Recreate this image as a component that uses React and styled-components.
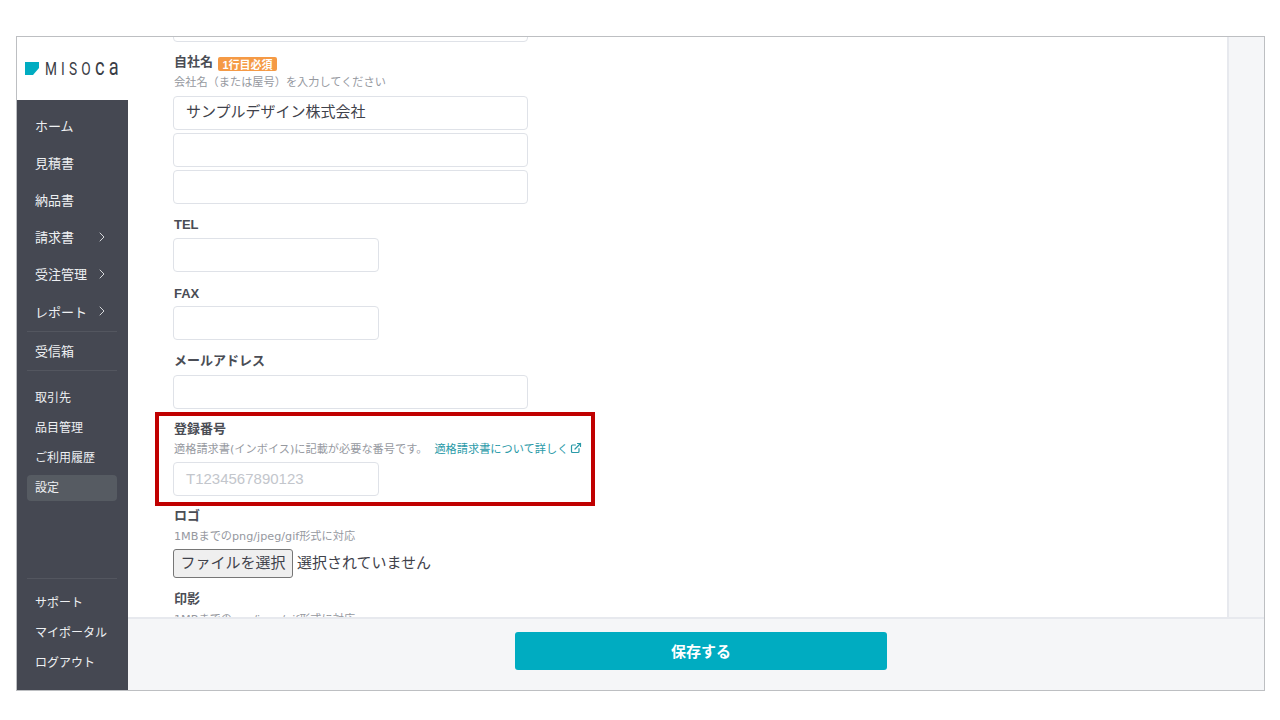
import styled, { createGlobalStyle } from 'styled-components';
import { ChevronRight, ExternalLink } from 'lucide-react';

const GlobalStyle = createGlobalStyle`
  html, body {
    margin: 0;
    background: #fff;
    font-family: "Liberation Sans", "Noto Sans CJK JP", sans-serif;
    color: #3f424b;
  }
  * { box-sizing: border-box; }
`;

const Frame = styled.div`
  position: relative;
  display: flex;
  width: 1249px;
  height: 655px;
  margin: 36px 0 0 16px;
  border: 1px solid #bdbfc2;
  overflow: hidden;
`;

const Sidebar = styled.aside`
  display: flex;
  flex-direction: column;
  flex: 0 0 111px;
  min-width: 0;
  background: #454852;
`;

const LogoBox = styled.div`
  display: flex;
  align-items: center;
  gap: 6px;
  height: 63px;
  padding-left: 8px;
  background: #fff;
  flex-shrink: 0;
  overflow: hidden;
  svg { flex-shrink: 0; }
`;

const LogoText = styled.span`
  display: inline-block;
  flex-shrink: 0;
  font-family: Roboto, sans-serif;
  font-size: 18px;
  line-height: 1;
  letter-spacing: 5.5px;
  white-space: nowrap;
  color: #3a3d46;
  transform: scaleX(0.76);
  transform-origin: left center;
`;

const LogoTail = styled.span`
  font-size: 24px;
  line-height: 0;
`;

const NavGroup = styled.div`
  display: flex;
  flex-direction: column;
  padding: ${(p) => p.$pad || '0'};
  margin: ${(p) => (p.$auto ? 'auto' : '0')} 11px 0 10px;
  border-bottom: ${(p) => (p.$line ? '1px solid #53565f' : 'none')};
  border-top: ${(p) => (p.$lineTop ? '1px solid #53565f' : 'none')};
`;

const BigItem = styled.div`
  display: flex;
  align-items: center;
  justify-content: space-between;
  height: ${(p) => (p.$compact ? '36px' : '37.2px')};
  padding: 0 7px 0 8px;
  font-size: 13px;
  color: #eef0f2;
  svg { color: #d5d7da; }
`;

const SmallItem = styled.div`
  display: flex;
  align-items: center;
  height: 26px;
  margin: ${(p) => (p.$active ? '2px' : '0')} 0 4px;
  padding: 0 8px ${(p) => (p.$active ? '3px' : '0')};
  border-radius: 4px;
  font-size: 12px;
  color: #eef0f2;
  background: ${(p) => (p.$active ? '#565b62' : 'transparent')};
`;

const Main = styled.main`
  display: flex;
  flex-direction: column;
  flex: 1;
  min-width: 0;
`;

const Upper = styled.div`
  display: flex;
  flex: 1;
  min-height: 0;
`;

const Content = styled.div`
  flex: 1;
  padding-left: 45px;
  overflow: hidden;
  background: #fff;
`;

const SidePanel = styled.div`
  flex: 0 0 37px;
  background: #f5f6f8;
  border-left: 2px solid #e7e9ee;
`;

const Footer = styled.footer`
  display: flex;
  justify-content: center;
  align-items: center;
  flex: 0 0 73px;
  padding: 0 0 8px 10px;
  background: #f5f6f8;
  border-top: 2px solid #e7e9ee;
`;

const SaveButton = styled.button`
  width: 372px;
  height: 38px;
  border: 0;
  border-radius: 3px;
  background: #00acc1;
  color: #fff;
  font: bold 15px "Liberation Sans", "Noto Sans CJK JP", sans-serif;
`;

const TextInput = styled.div`
  display: flex;
  align-items: center;
  width: ${(p) => (p.$short ? '206px' : '355px')};
  height: 34px;
  margin-bottom: ${(p) => p.$mb || '0'};
  padding: 0 12px ${(p) => p.$lift || '0'};
  background: #fff;
  border: 1.5px solid #dfe2e8;
  border-radius: 4px;
  font-size: 15px;
  color: ${(p) => (p.$placeholder ? '#c3c6cc' : '#3f424b')};
`;

const ClippedInput = styled(TextInput)`
  margin-top: -29px;
  margin-bottom: 9px;
`;

const Label = styled.div`
  display: flex;
  align-items: center;
  gap: 5px;
  height: 18px;
  margin: ${(p) => p.$top || '0'} 0 ${(p) => p.$mb || '0'} 1px;
  font-size: 13px;
  font-weight: bold;
  color: #4a4d55;
`;

const Badge = styled.span`
  display: inline-flex;
  align-items: center;
  justify-content: center;
  width: 59px;
  height: 14px;
  margin-top: 8px;
  border-radius: 2px;
  background: #f59a45;
  color: #fff;
  font-size: 11px;
  font-weight: bold;
`;

const Hint = styled.div`
  display: flex;
  align-items: center;
  height: 16px;
  margin: 4px 0 ${(p) => p.$mb || '6px'} 1px;
  font-family: "DejaVu Sans", "Noto Sans CJK JP", sans-serif;
  font-size: 11.2px;
  color: #96999f;
  white-space: nowrap;
`;

const DocLink = styled.span`
  display: inline-flex;
  align-items: center;
  gap: 2px;
  margin-left: 7px;
  color: #2a9aa8;
`;

const FileRow = styled.div`
  display: flex;
  align-items: center;
  gap: 4px;
  font-size: 15px;
  line-height: 1;
  color: #3f424b;
`;

const FileButton = styled.div`
  display: flex;
  align-items: center;
  justify-content: center;
  width: 120px;
  height: 29px;
  padding-bottom: 2px;
  background: #efefef;
  border: 1px solid #767676;
  border-radius: 3px;
`;

const FileStatus = styled.span`
  padding-bottom: 3px;
`;

const Highlight = styled.div`
  position: absolute;
  left: 138px;
  top: 375px;
  width: 440px;
  height: 94px;
  border: 4px solid #c00000;
  pointer-events: none;
`;

const LogoMark = () => (
  <svg width="14" height="13" viewBox="0 0 14 13">
    <polygon points="0,0 14,0 14,6 8,13 0,13" fill="#00acc1" />
  </svg>
);

const App = () => (
  <>
    <GlobalStyle />
    <Frame>
      <Sidebar>
        <LogoBox>
          <LogoMark />
          <LogoText>MISO<LogoTail>ca</LogoTail></LogoText>
        </LogoBox>
        <NavGroup $pad="6.5px 0 1.5px" $line>
          <BigItem>ホーム</BigItem>
          <BigItem>見積書</BigItem>
          <BigItem>納品書</BigItem>
          <BigItem>請求書<ChevronRight size={16} strokeWidth={1.5} /></BigItem>
          <BigItem>受注管理<ChevronRight size={16} strokeWidth={1.5} /></BigItem>
          <BigItem>レポート<ChevronRight size={16} strokeWidth={1.5} /></BigItem>
        </NavGroup>
        <NavGroup $pad="0 0 2.2px" $line>
          <BigItem $compact>受信箱</BigItem>
        </NavGroup>
        <NavGroup $pad="12px 0 0">
          <SmallItem>取引先</SmallItem>
          <SmallItem>品目管理</SmallItem>
          <SmallItem>ご利用履歴</SmallItem>
          <SmallItem $active>設定</SmallItem>
        </NavGroup>
        <NavGroup $auto $lineTop $pad="9px 0 12px">
          <SmallItem>サポート</SmallItem>
          <SmallItem>マイポータル</SmallItem>
          <SmallItem>ログアウト</SmallItem>
        </NavGroup>
      </Sidebar>
      <Main>
        <Upper>
          <Content>
            <ClippedInput />
            <Label>自社名<Badge>1行目必須</Badge></Label>
            <Hint $mb="7px">会社名（または屋号）を入力してください</Hint>
            <TextInput $mb="3px" $lift="5px">サンプルデザイン株式会社</TextInput>
            <TextInput $mb="3px" />
            <TextInput />

            <Label $top="11px" $mb="5px">TEL</Label>
            <TextInput $short />

            <Label $top="12px" $mb="4px">FAX</Label>
            <TextInput $short />

            <Label $top="10px" $mb="7px">メールアドレス</Label>
            <TextInput />

            <Label $top="9px">登録番号</Label>
            <Hint>
              適格請求書(インボイス)に記載が必要な番号です。
              <DocLink>適格請求書について詳しく<ExternalLink size={12} strokeWidth={2.4} /></DocLink>
            </Hint>
            <TextInput $short $placeholder $lift="2px">T1234567890123</TextInput>

            <Label $top="9px">ロゴ</Label>
            <Hint>1MBまでのpng/jpeg/gif形式に対応</Hint>
            <FileRow>
              <FileButton>ファイルを選択</FileButton>
              <FileStatus>選択されていません</FileStatus>
            </FileRow>

            <Label $top="10px">印影</Label>
            <Hint>1MBまでのpng/jpeg/gif形式に対応</Hint>
          </Content>
          <SidePanel />
        </Upper>
        <Footer>
          <SaveButton>保存する</SaveButton>
        </Footer>
      </Main>
      <Highlight />
    </Frame>
  </>
);

export default App;
